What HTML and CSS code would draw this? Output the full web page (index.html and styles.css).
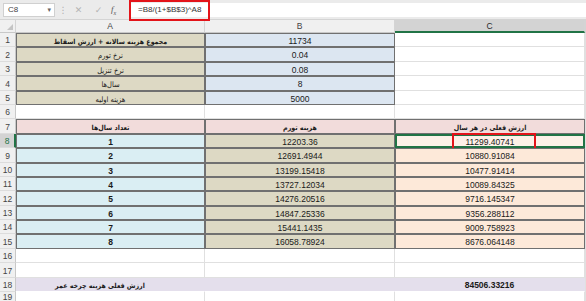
FILE: index.html
```html
<!DOCTYPE html>
<html lang="fa">
<head>
<meta charset="utf-8">
<title>Sheet</title>
<link rel="stylesheet" href="styles.css">
</head>
<body>
<div class="app">
  <div class="toolbar">
    <div class="namebox"><span>C8</span><span class="caret">&#9662;</span></div>
    <span class="dots">&#8942;</span>
    <span class="tbtn">&#10005;</span>
    <span class="tbtn">&#10003;</span>
    <span class="fx">f<sub>x</sub></span>
    <div class="formula">
      <span class="ftext">=B8/(1+$B$3)^A8</span>
      <span class="mark mark-formula"></span>
    </div>
  </div>
  <div class="sheet">
    <div class="corner"><span class="tri"></span></div>
    <div class="hdr">A</div>
    <div class="hdr">B</div>
    <div class="hdr hsel">C</div>
    <div class="hdr"></div>

    <div class="rh">1</div>
    <div class="cell bd tan bold fa"><span dir="rtl">مجموع هزینه سالانه + ارزش اسقاط</span></div>
    <div class="cell bd sky">11734</div>
    <div class="cell"></div><div class="cell"></div>

    <div class="rh">2</div>
    <div class="cell bd tan fa"><span dir="rtl">نرخ تورم</span></div>
    <div class="cell bd sky">0.04</div>
    <div class="cell"></div><div class="cell"></div>

    <div class="rh">3</div>
    <div class="cell bd tan fa"><span dir="rtl">نرخ تنزیل</span></div>
    <div class="cell bd sky">0.08</div>
    <div class="cell"></div><div class="cell"></div>

    <div class="rh">4</div>
    <div class="cell bd tan fa"><span dir="rtl">سال‌ها</span></div>
    <div class="cell bd sky">8</div>
    <div class="cell"></div><div class="cell"></div>

    <div class="rh">5</div>
    <div class="cell bd tan fa"><span dir="rtl">هزینه اولیه</span></div>
    <div class="cell bd sky">5000</div>
    <div class="cell"></div><div class="cell"></div>

    <div class="rh">6</div>
    <div class="cell"></div><div class="cell"></div><div class="cell"></div><div class="cell"></div>

    <div class="rh">7</div>
    <div class="cell bd pink bold fa"><span dir="rtl">تعداد سال‌ها</span></div>
    <div class="cell bd pink bold fa"><span dir="rtl">هزینه تورم</span></div>
    <div class="cell bd pink bold fa"><span dir="rtl">ارزش فعلی در هر سال</span></div>
    <div class="cell"></div>

    <div class="rh rsel">8</div>
    <div class="cell bd aqua bold">1</div>
    <div class="cell bd tan">12203.36</div>
    <div class="cell bd peach sel">11299.40741<span class="mark mark-cell"></span></div>
    <div class="cell"></div>

    <div class="rh">9</div>
    <div class="cell bd aqua bold">2</div>
    <div class="cell bd tan">12691.4944</div>
    <div class="cell bd peach">10880.91084</div>
    <div class="cell"></div>

    <div class="rh">10</div>
    <div class="cell bd aqua bold">3</div>
    <div class="cell bd tan">13199.15418</div>
    <div class="cell bd peach">10477.91414</div>
    <div class="cell"></div>

    <div class="rh">11</div>
    <div class="cell bd aqua bold">4</div>
    <div class="cell bd tan">13727.12034</div>
    <div class="cell bd peach">10089.84325</div>
    <div class="cell"></div>

    <div class="rh">12</div>
    <div class="cell bd aqua bold">5</div>
    <div class="cell bd tan">14276.20516</div>
    <div class="cell bd peach">9716.145347</div>
    <div class="cell"></div>

    <div class="rh">13</div>
    <div class="cell bd aqua bold">6</div>
    <div class="cell bd tan">14847.25336</div>
    <div class="cell bd peach">9356.288112</div>
    <div class="cell"></div>

    <div class="rh">14</div>
    <div class="cell bd aqua bold">7</div>
    <div class="cell bd tan">15441.1435</div>
    <div class="cell bd peach">9009.758923</div>
    <div class="cell"></div>

    <div class="rh">15</div>
    <div class="cell bd aqua bold">8</div>
    <div class="cell bd tan">16058.78924</div>
    <div class="cell bd peach">8676.064148</div>
    <div class="cell"></div>

    <div class="rh">16</div>
    <div class="cell"></div><div class="cell"></div><div class="cell"></div><div class="cell"></div>

    <div class="rh">17</div>
    <div class="cell"></div><div class="cell"></div><div class="cell"></div><div class="cell"></div>

    <div class="rh">18</div>
    <div class="cell lav bold fa total-label"><span dir="rtl">ارزش فعلی هزینه چرخه عمر</span></div>
    <div class="cell lav"></div>
    <div class="cell lav bold">84506.33216</div>
    <div class="cell"></div>

    <div class="rh">19</div>
    <div class="cell"></div><div class="cell"></div><div class="cell"></div><div class="cell"></div>
  </div>
</div>
</body>
</html>
```
FILE: styles.css
```css
* { box-sizing: border-box; }
html, body { margin: 0; padding: 0; }
body {
  width: 586px;
  height: 301px;
  overflow: hidden;
  background: #ffffff;
  font-family: "Liberation Sans", "DejaVu Sans", sans-serif;
  font-size: 8.5px;
  color: #1a1a1a;
}
.app { display: flex; flex-direction: column; height: 301px; }

.toolbar {
  height: 20px;
  flex: 0 0 20px;
  display: flex;
  align-items: center;
  background: #ebebeb;
  border-bottom: 1px solid #d4d4d4;
  padding-left: 3px;
}
.namebox {
  width: 52px;
  height: 14px;
  background: #fff;
  border: 1px solid #d0d0d0;
  display: flex;
  align-items: center;
  justify-content: space-between;
  padding: 0 3px 0 4px;
  color: #444;
  font-size: 8px;
}
.caret { font-size: 7px; color: #666; }
.dots { margin-left: 3px; width: 10px; color: #b0b0b0; font-size: 9px; text-align: center; }
.tbtn { width: 19px; text-align: center; color: #b4b4b4; font-size: 9px; margin-left: 1px; }
.fx { width: 14px; margin-left: 3px; font-family: "Liberation Serif", serif; font-style: italic; color: #555; font-size: 9px; }
.fx sub { font-size: 6px; }
.formula {
  position: relative;
  flex: 1;
  height: 14px;
  margin-left: 4px;
  background: #fff;
  display: flex;
  align-items: center;
  padding-left: 9px;
  font-size: 8px;
  color: #333;
}
.mark { position: absolute; border: 2px solid #e3141a; }
.mark-formula { left: 0; top: -3px; width: 81px; height: 21px; }

.sheet {
  flex: 1;
  display: grid;
  grid-template-columns: 16px 189px 190px 190px 1fr;
  grid-template-rows: 13px repeat(18, 14.4px) 1fr;
}
.corner {
  position: relative;
  background: #f0f0f0;
  border-right: 1px solid #d4d4d4;
  border-bottom: 1px solid #c8c8c8;
}
.tri {
  position: absolute;
  right: 2px;
  bottom: 2px;
  width: 0;
  height: 0;
  border-left: 6px solid transparent;
  border-bottom: 6px solid #c4c4c4;
}
.hdr {
  background: #f0f0f0;
  border-right: 1px solid #d4d4d4;
  border-bottom: 1px solid #c8c8c8;
  display: flex;
  align-items: center;
  justify-content: center;
  color: #444;
  font-size: 8.5px;
}
.hsel { background: #d3d3d3; border-bottom: 2px solid #217346; color: #2a2a2a; }
.rh {
  background: #f0f0f0;
  border-right: 1px solid #c8c8c8;
  border-bottom: 1px solid #dcdcdc;
  display: flex;
  align-items: flex-end;
  justify-content: center;
  padding-bottom: 1px;
  color: #444;
  font-size: 8.5px;
}
.rsel { background: #d3d3d3; color: #217346; border-right: 2px solid #217346; }

.cell {
  position: relative;
  border-right: 1px solid #e0e0e0;
  border-bottom: 1px solid #e0e0e0;
  display: block;
  text-align: center;
  line-height: 13px;
  white-space: nowrap;
  padding-top: 1px;
}
.fa span {
  font-family: "DejaVu Sans", sans-serif;
  font-stretch: condensed;
  font-size: 7.5px;
}
.fa.bold span { font-size: 7px; }
.bd { border: 1px solid #707070; }
.bold { font-weight: bold; }
.tan { background: #ddd9c4; }
.sky { background: #dce6f1; }
.pink { background: #f2dcdb; }
.aqua { background: #daeef3; }
.peach { background: #fde9d9; }
.lav { background: #e4dfec; border-right-color: #e4dfec; border-bottom-color: #ffffff; }
.sel { box-shadow: inset 0 0 0 1px #217346; border-color: #217346; background: #fdf1e8; }
.mark-cell { left: 56px; top: -2px; width: 84px; height: 17px; }
.total-label { padding-right: 20px; }
```
